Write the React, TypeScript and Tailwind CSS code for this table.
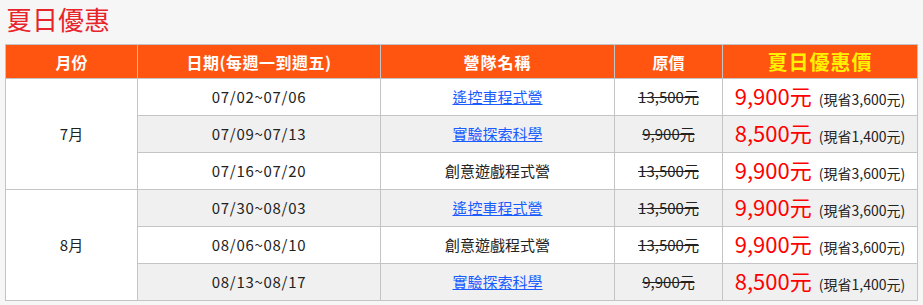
import React from 'react';

type Row = {
  date: string;
  camp: string;
  link: boolean;
  orig: string;
  price: string;
  save: string;
};

const months: { month: string; rows: Row[] }[] = [
  {
    month: '7月',
    rows: [
      { date: '07/02~07/06', camp: '遙控車程式營', link: true, orig: '13,500元', price: '9,900元', save: '(現省3,600元)' },
      { date: '07/09~07/13', camp: '實驗探索科學', link: true, orig: '9,900元', price: '8,500元', save: '(現省1,400元)' },
      { date: '07/16~07/20', camp: '創意遊戲程式營', link: false, orig: '13,500元', price: '9,900元', save: '(現省3,600元)' },
    ],
  },
  {
    month: '8月',
    rows: [
      { date: '07/30~08/03', camp: '遙控車程式營', link: true, orig: '13,500元', price: '9,900元', save: '(現省3,600元)' },
      { date: '08/06~08/10', camp: '創意遊戲程式營', link: false, orig: '13,500元', price: '9,900元', save: '(現省3,600元)' },
      { date: '08/13~08/17', camp: '實驗探索科學', link: true, orig: '9,900元', price: '8,500元', save: '(現省1,400元)' },
    ],
  },
];

const FONT = { fontFamily: '"Noto Sans CJK TC", "Noto Sans", sans-serif' };

export default function App() {
  let idx = 0;
  return (
    <div className="min-h-screen bg-[#f6f6f6] px-[5px] pt-[1px]" style={FONT}>
      <h1 className="pl-[1px] text-[26px] leading-[36px] font-normal text-[#e8242b] mb-[7px]">夏日優惠</h1>
      <table className="table-fixed border-collapse w-[912px] text-[15px] text-[#222]">
        <colgroup>
          <col className="w-[132px]" />
          <col className="w-[243px]" />
          <col className="w-[234px]" />
          <col className="w-[108px]" />
          <col className="w-[195px]" />
        </colgroup>
        <thead>
          <tr className="h-[34px] bg-[#ff5511] text-white font-bold text-[16px]">
            <th className="border border-[#c4c4c4] font-bold">月份</th>
            <th className="border border-[#c4c4c4] font-bold tracking-[0.5px]">日期(每週一到週五)</th>
            <th className="border border-[#c4c4c4] font-bold tracking-[1px]">營隊名稱</th>
            <th className="border border-[#c4c4c4] font-bold">原價</th>
            <th className="border border-[#c4c4c4] font-bold text-[20px] text-[#fff200] tracking-[1px]">夏日優惠價</th>
          </tr>
        </thead>
        <tbody>
          {months.map(m =>
            m.rows.map((r, i) => {
              const grey = idx++ % 2 === 1;
              const bg = grey ? 'bg-[#f0f0f0]' : 'bg-white';
              return (
                <tr key={m.month + i} className="h-[37px]">
                  {i === 0 && (
                    <td rowSpan={m.rows.length} className="border border-[#c4c4c4] bg-white text-center">
                      {m.month}
                    </td>
                  )}
                  <td className={`border border-[#c4c4c4] text-center tracking-[0.7px] ${bg}`}>{r.date}</td>
                  <td className={`border border-[#c4c4c4] text-center ${bg}`}>
                    {r.link ? (
                      <a href="#" className="text-[#1a5cff] underline">{r.camp}</a>
                    ) : (
                      r.camp
                    )}
                  </td>
                  <td className={`border border-[#c4c4c4] text-center line-through ${bg}`}>{r.orig}</td>
                  <td className={`border border-[#c4c4c4] text-center ${bg}`}>
                    <span className="text-[22px] leading-none text-[#ff0000]">{r.price}</span>
                    <span className="ml-[7px] text-[14px]">{r.save}</span>
                  </td>
                </tr>
              );
            })
          )}
        </tbody>
      </table>
    </div>
  );
}
